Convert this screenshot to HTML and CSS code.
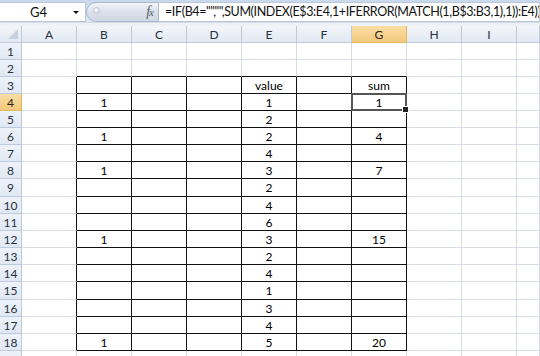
FILE: index.html
```html
<!DOCTYPE html>
<html lang="en">

<head>
    <meta charset="UTF-8">
    <meta name="viewport" content="width=device-width, initial-scale=1.0">
    <title>Running sum - Sheet1</title>
    <link rel="stylesheet" href="styles.css">
</head>

<body>
    <div class="formula-bar">
        <div class="name-box">
            <span class="name-ref">G4</span>
            <span class="name-arrow"></span>
        </div>
        <div class="fx-button">
            <span class="fx-grip"></span>
            <span class="fx-label">f<span class="fx-x">x</span></span>
        </div>
        <div class="formula-input">=IF(B4="","",SUM(INDEX(E$3:E4,1+IFERROR(MATCH(1,B$3:B3,1),1)):E4))</div>
    </div>
    <div class="bar-gap"></div>

    <table class="sheet">
        <colgroup>
            <col class="col-head">
            <col class="col"><col class="col"><col class="col">
            <col class="col"><col class="col"><col class="col">
            <col class="col"><col class="col"><col class="col">
            <col>
        </colgroup>
        <thead>
            <tr>
                <th class="corner"><span class="corner-tri"></span></th>
                <th>A</th><th>B</th><th>C</th><th>D</th><th>E</th><th>F</th>
                <th class="active">G</th><th>H</th><th>I</th><th></th>
            </tr>
        </thead>
        <tbody>
            <tr><th>1</th><td></td><td></td><td></td><td></td><td></td><td></td><td></td><td></td><td></td><td></td></tr>
            <tr><th>2</th><td></td><td class="top"></td><td class="top"></td><td class="top"></td><td class="top"></td><td class="top"></td><td class="top"></td><td></td><td></td><td></td></tr>
            <tr><th>3</th><td class="edge"></td><td class="box"></td><td class="box"></td><td class="box"></td><td class="box">value</td><td class="box"></td><td class="box">sum</td><td></td><td></td><td></td></tr>
            <tr><th class="active">4</th><td class="edge"></td><td class="box">1</td><td class="box"></td><td class="box"></td><td class="box">1</td><td class="box"></td><td class="box sel">1</td><td></td><td></td><td></td></tr>
            <tr><th>5</th><td class="edge"></td><td class="box"></td><td class="box"></td><td class="box"></td><td class="box">2</td><td class="box"></td><td class="box"></td><td></td><td></td><td></td></tr>
            <tr><th>6</th><td class="edge"></td><td class="box">1</td><td class="box"></td><td class="box"></td><td class="box">2</td><td class="box"></td><td class="box">4</td><td></td><td></td><td></td></tr>
            <tr><th>7</th><td class="edge"></td><td class="box"></td><td class="box"></td><td class="box"></td><td class="box">4</td><td class="box"></td><td class="box"></td><td></td><td></td><td></td></tr>
            <tr><th>8</th><td class="edge"></td><td class="box">1</td><td class="box"></td><td class="box"></td><td class="box">3</td><td class="box"></td><td class="box">7</td><td></td><td></td><td></td></tr>
            <tr class="tall"><th>9</th><td class="edge"></td><td class="box"></td><td class="box"></td><td class="box"></td><td class="box">2</td><td class="box"></td><td class="box"></td><td></td><td></td><td></td></tr>
            <tr><th>10</th><td class="edge"></td><td class="box"></td><td class="box"></td><td class="box"></td><td class="box">4</td><td class="box"></td><td class="box"></td><td></td><td></td><td></td></tr>
            <tr><th>11</th><td class="edge"></td><td class="box"></td><td class="box"></td><td class="box"></td><td class="box">6</td><td class="box"></td><td class="box"></td><td></td><td></td><td></td></tr>
            <tr><th>12</th><td class="edge"></td><td class="box">1</td><td class="box"></td><td class="box"></td><td class="box">3</td><td class="box"></td><td class="box">15</td><td></td><td></td><td></td></tr>
            <tr><th>13</th><td class="edge"></td><td class="box"></td><td class="box"></td><td class="box"></td><td class="box">2</td><td class="box"></td><td class="box"></td><td></td><td></td><td></td></tr>
            <tr><th>14</th><td class="edge"></td><td class="box"></td><td class="box"></td><td class="box"></td><td class="box">4</td><td class="box"></td><td class="box"></td><td></td><td></td><td></td></tr>
            <tr class="tall"><th>15</th><td class="edge"></td><td class="box"></td><td class="box"></td><td class="box"></td><td class="box">1</td><td class="box"></td><td class="box"></td><td></td><td></td><td></td></tr>
            <tr><th>16</th><td class="edge"></td><td class="box"></td><td class="box"></td><td class="box"></td><td class="box">3</td><td class="box"></td><td class="box"></td><td></td><td></td><td></td></tr>
            <tr><th>17</th><td class="edge"></td><td class="box"></td><td class="box"></td><td class="box"></td><td class="box">4</td><td class="box"></td><td class="box"></td><td></td><td></td><td></td></tr>
            <tr><th>18</th><td class="edge"></td><td class="box">1</td><td class="box"></td><td class="box"></td><td class="box">5</td><td class="box"></td><td class="box">20</td><td></td><td></td><td></td></tr>
            <tr><th></th><td></td><td></td><td></td><td></td><td></td><td></td><td></td><td></td><td></td><td></td></tr>
        </tbody>
    </table>
</body>

</html>
```

FILE: styles.css
```css
* {
    margin: 0;
    padding: 0;
    box-sizing: border-box;
}

body {
    font-family: Lato, 'Liberation Sans', sans-serif;
    background-color: #fff;
    color: #000;
    overflow: hidden;
}

/* formula bar */
.formula-bar {
    display: flex;
    height: 22px;
    padding-top: 2px;
    background: linear-gradient(to bottom, #c9d8ec, #dfe8f4);
}

.name-box {
    display: flex;
    align-items: center;
    width: 86px;
    height: 20px;
    background: #fff;
    border: 1px solid #b8c7da;
    border-left: none;
}

.name-ref {
    flex: 1;
    text-align: center;
    font-size: 13px;
    padding-left: 4px;
    color: #111;
}

.name-arrow {
    width: 0;
    height: 0;
    margin-right: 6px;
    border-left: 3px solid transparent;
    border-right: 3px solid transparent;
    border-top: 3px solid #111;
}

.fx-button {
    display: flex;
    align-items: center;
    justify-content: space-between;
    width: 73px;
    height: 20px;
    padding: 0 5px 0 6px;
    border: 1px solid #a9b8cb;
    border-radius: 10px 0 0 10px;
    background: linear-gradient(to bottom, #f1f4f8, #d9e0ea 55%, #cfd7e3);
}

.fx-grip {
    width: 7px;
    height: 7px;
    margin-top: -4px;
    border-radius: 50%;
    background: radial-gradient(circle at 40% 40%, #ffffff, #c3ccd8);
    border: 1px solid #bcc6d3;
}

.fx-label {
    font-family: 'Liberation Serif', serif;
    font-style: italic;
    font-size: 14px;
    color: #555c66;
    letter-spacing: -1px;
}

.fx-x {
    font-size: 11px;
}

.formula-input {
    flex: 1;
    height: 20px;
    padding-left: 6px;
    background: #fff;
    border: 1px solid #b8c7da;
    border-left: none;
    font-size: 12.5px;
    letter-spacing: -0.38px;
    line-height: 18px;
    white-space: nowrap;
    overflow: hidden;
    color: #111;
}

.bar-gap {
    height: 4px;
    background: #eef1f6;
    border-top: 1px solid #d3dbe6;
}

/* sheet grid */
.sheet {
    width: 540px;
    table-layout: fixed;
    border-collapse: separate;
    border-spacing: 0;
    font-size: 12px;
}

.col-head {
    width: 22px;
}

.col {
    width: 55px;
}

.sheet th,
.sheet td {
    height: 17px;
    line-height: 15px;
    text-align: center;
    border-right: 1px solid #d8dde5;
    border-bottom: 1px solid #d8dde5;
    white-space: nowrap;
}

.sheet tr.tall th,
.sheet tr.tall td {
    height: 18px;
}

.sheet th {
    font-weight: normal;
    color: #27323f;
    background: linear-gradient(to bottom, #eef3fa, #e0e8f3);
    border-right-color: #bccadb;
    border-bottom-color: #bccadb;
}

.sheet thead th {
    background: linear-gradient(to bottom, #f3f6fb, #e2e9f3);
}

.sheet th.active,
.sheet thead th.active {
    background: linear-gradient(to bottom, #f9dea6, #f4c97a);
    color: #2b2414;
    border-right-color: #e0b564;
    border-bottom-color: #e0b564;
}

.corner {
    position: relative;
}

.corner-tri {
    position: absolute;
    right: 3px;
    bottom: 3px;
    width: 0;
    height: 0;
    border-left: 10px solid transparent;
    border-bottom: 10px solid #c5d1e0;
}

/* bordered range B3:G18 */
.sheet td.top {
    border-bottom-color: #111;
}

.sheet td.edge {
    border-right-color: #111;
}

.sheet td.box {
    border-right-color: #111;
    border-bottom-color: #111;
}

/* active cell */
.sheet td.sel {
    position: relative;
}

.sel::after {
    content: '';
    position: absolute;
    left: -1px;
    top: -1px;
    right: -1px;
    bottom: -1px;
    border: 2px solid #555;
}

.sel::before {
    content: '';
    position: absolute;
    right: -3px;
    bottom: -3px;
    width: 5px;
    height: 5px;
    background: #222;
    border: 1px solid #fff;
    z-index: 1;
}
```
